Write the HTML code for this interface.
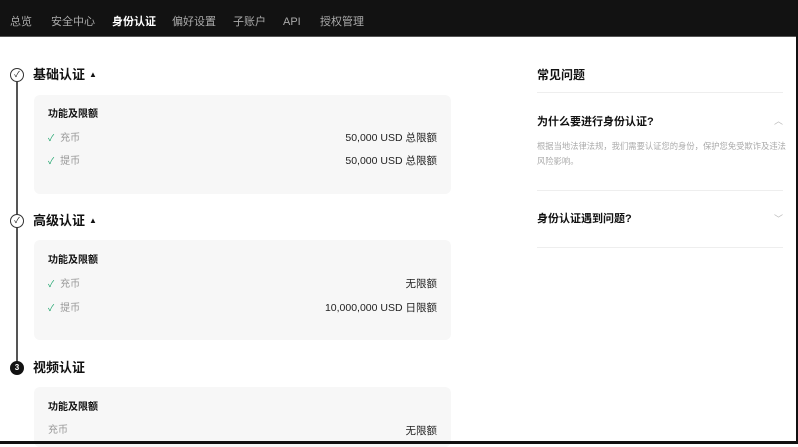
<!DOCTYPE html>
<html><head><meta charset="utf-8"><style>
*{margin:0;padding:0;box-sizing:border-box}
body{width:798px;height:444px;overflow:hidden;background:#fff;font-family:"Liberation Sans","Noto Sans CJK SC",sans-serif;color:#121212;position:relative}
.nav{position:absolute;left:0;top:0;width:798px;height:37px;background:#121212;border-bottom:1px solid #555}
.nav span{position:absolute;top:15px;font-size:11px;color:#aaa;line-height:14px}
.nav span.on{color:#fff;font-weight:bold}
.line{position:absolute;left:16px;top:82px;width:1.5px;height:282px;background:#555}
.circ{position:absolute;left:10px;width:14px;height:14px;border:1.2px solid #333;border-radius:50%;background:#fff;font-size:8px;text-align:center;line-height:12px}
.circ.f{background:#121212;color:#fff;border-color:#121212;font-weight:bold}
.h{position:absolute;left:33px;font-size:13px;font-weight:bold;line-height:16px}
.h i{font-style:normal;font-size:8px;margin-left:4px;vertical-align:2px}
.card{position:absolute;left:34px;width:417px;background:#f7f7f7;border-radius:6px}
.t{position:absolute;left:14px;font-size:10px;font-weight:bold;line-height:12px}
.r{position:absolute;left:14px;right:14px;font-size:10px;line-height:12px;color:#999}
.r b{font-weight:normal;color:#1aa36a;margin-right:6px;font-size:9px}
.r em{font-style:normal;position:absolute;right:0;color:#222;font-size:10.5px}
.fq{position:absolute;left:537px;font-size:11px;font-weight:bold;line-height:14px}
.dv{position:absolute;left:537px;width:246px;height:1px;background:#eee}
.ans{position:absolute;left:537px;width:250px;font-size:8.3px;line-height:15px;color:#aaa}
.ch{position:absolute;left:774px;font-size:9px;color:#bbb}
</style></head><body>
<div class="nav">
<span style="left:10px">总览</span><span style="left:51px">安全中心</span><span class="on" style="left:112px">身份认证</span><span style="left:172px">偏好设置</span><span style="left:233px">子账户</span><span style="left:283px">API</span><span style="left:320px">授权管理</span>
</div>
<div class="line"></div>
<div class="circ" style="top:68px">✓</div>
<div class="h" style="top:67px">基础认证<i>▲</i></div>
<div class="card" style="top:95px;height:99px">
<div class="t" style="top:14px">功能及限额</div>
<div class="r" style="top:37px"><b>✓</b>充币<em>50,000 USD 总限额</em></div>
<div class="r" style="top:60px"><b>✓</b>提币<em>50,000 USD 总限额</em></div>
</div>
<div class="circ" style="top:214px">✓</div>
<div class="h" style="top:213px">高级认证<i>▲</i></div>
<div class="card" style="top:240px;height:100px">
<div class="t" style="top:15px">功能及限额</div>
<div class="r" style="top:38px"><b>✓</b>充币<em>无限额</em></div>
<div class="r" style="top:62px"><b>✓</b>提币<em>10,000,000 USD 日限额</em></div>
</div>
<div class="circ f" style="top:361px">3</div>
<div class="h" style="top:360px">视频认证</div>
<div class="card" style="top:387px;height:60px">
<div class="t" style="top:15px">功能及限额</div>
<div class="r" style="top:38px">充币<em>无限额</em></div>
</div>
<div class="fq" style="top:68px;font-size:12px">常见问题</div>
<div class="dv" style="top:92px"></div>
<div class="fq" style="top:115px">为什么要进行身份认证?</div>
<div class="ch" style="top:114px">︿</div>
<div class="ans" style="top:139px">根据当地法律法规，我们需要认证您的身份，保护您免受欺诈及违法风险影响。</div>
<div class="dv" style="top:190px"></div>
<div class="fq" style="top:212px">身份认证遇到问题?</div>
<div class="ch" style="top:212px">﹀</div>
<div class="dv" style="top:247px"></div>
<div style="position:absolute;left:0;top:441px;width:798px;height:3px;background:#111"></div>
<div style="position:absolute;left:796px;top:0;width:2px;height:444px;background:#111"></div>
</body></html>
